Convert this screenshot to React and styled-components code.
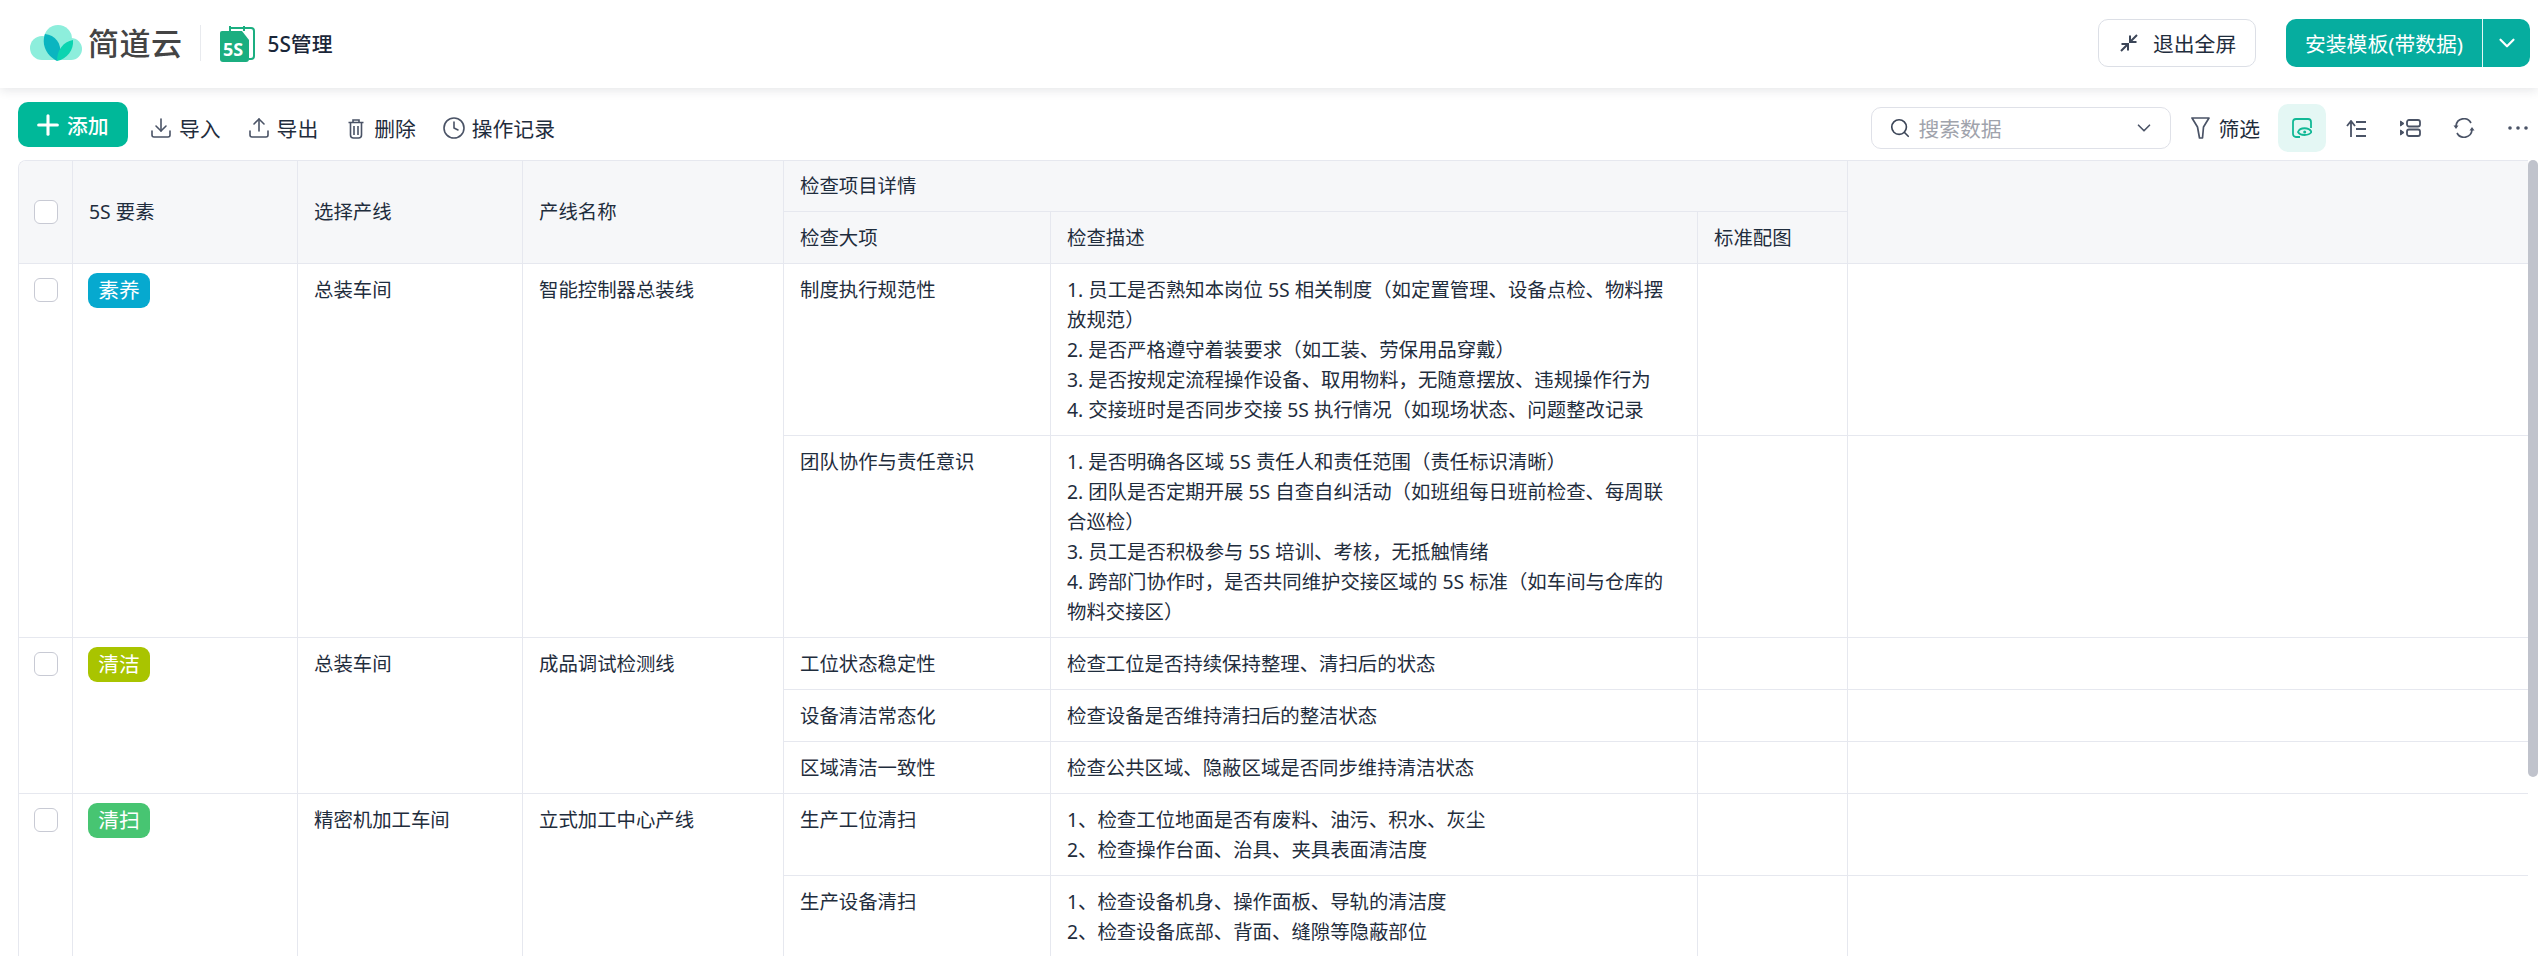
import React from "react";
import styled, { createGlobalStyle } from "styled-components";
import { ChevronDown, Clock, Download, Plus, Search, Upload } from "lucide-react";

const rows = [
  {
    name: "素养",
    color: "#06a9cf",
    workshop: "总装车间",
    line: "智能控制器总装线",
    items: [
      {
        title: "制度执行规范性",
        desc: [
          "1. 员工是否熟知本岗位 5S 相关制度（如定置管理、设备点检、物料摆放规范）",
          "2. 是否严格遵守着装要求（如工装、劳保用品穿戴）",
          "3. 是否按规定流程操作设备、取用物料，无随意摆放、违规操作行为",
          "4. 交接班时是否同步交接 5S 执行情况（如现场状态、问题整改记录",
        ],
      },
      {
        title: "团队协作与责任意识",
        desc: [
          "1. 是否明确各区域 5S 责任人和责任范围（责任标识清晰）",
          "2. 团队是否定期开展 5S 自查自纠活动（如班组每日班前检查、每周联合巡检）",
          "3. 员工是否积极参与 5S 培训、考核，无抵触情绪",
          "4. 跨部门协作时，是否共同维护交接区域的 5S 标准（如车间与仓库的物料交接区）",
        ],
      },
    ],
  },
  {
    name: "清洁",
    color: "#a9c400",
    workshop: "总装车间",
    line: "成品调试检测线",
    items: [
      { title: "工位状态稳定性", desc: ["检查工位是否持续保持整理、清扫后的状态"] },
      { title: "设备清洁常态化", desc: ["检查设备是否维持清扫后的整洁状态"] },
      { title: "区域清洁一致性", desc: ["检查公共区域、隐蔽区域是否同步维持清洁状态"] },
    ],
  },
  {
    name: "清扫",
    color: "#47c572",
    workshop: "精密机加工车间",
    line: "立式加工中心产线",
    items: [
      {
        title: "生产工位清扫",
        desc: ["1、检查工位地面是否有废料、油污、积水、灰尘", "2、检查操作台面、治具、夹具表面清洁度"],
      },
      {
        title: "生产设备清扫",
        desc: ["1、检查设备机身、操作面板、导轨的清洁度", "2、检查设备底部、背面、缝隙等隐蔽部位"],
      },
    ],
  },
];

const CloudLogo = () => (
  <svg width="52" height="36" viewBox="0 0 52 36">
    <g fill="#8deedc">
      <circle cx="12" cy="23" r="12" />
      <circle cx="28" cy="14" r="14" />
      <circle cx="41" cy="24" r="11" />
      <rect x="12" y="20" width="29" height="15" />
    </g>
    <path d="M27 36C17 31 11 20 15 9c10 1 17 9 15 21z" fill="#0ab5c0" />
    <path d="M27 36c0-11 6-19 16-21 1 10-6 19-16 21z" fill="#0bd4b0" />
  </svg>
);

const AppIcon = () => (
  <svg width="35" height="37" viewBox="0 0 35 37">
    <path d="M9 3h22a3 3 0 0 1 3 3v25a3 3 0 0 1-3 3h-2" fill="none" stroke="#1bae80" strokeWidth="2" />
    <path d="M10 1v5M24 1v5" stroke="#1bae80" strokeWidth="2" />
    <path d="M2 6h20l7 9v19a3 3 0 0 1-3 3H3a3 3 0 0 1-3-3V8a2 2 0 0 1 2-2z" fill="#1bae80" />
    <text x="3" y="31" fontSize="18" fontWeight="700" fill="#fff" fontFamily="Noto Sans">
      5S
    </text>
  </svg>
);

const ExitIcon = () => (
  <svg width="20" height="20" viewBox="0 0 20 20" fill="none" stroke="#3c4658" strokeWidth="2">
    <path d="M18 2l-6 6M11 2.5V9h6.5" />
    <path d="M2 18l6-6M2.5 11H9v6.5" />
  </svg>
);

const TrashIcon = () => (
  <svg width="24" height="21" viewBox="-4 0 24 21" fill="none" stroke="#4a5366" strokeWidth="1.6">
    <path d="M0.5 4.5h15M5 4.5V2h6v2.5M2.5 4.5V17a3 3 0 0 0 3 3h5a3 3 0 0 0 3-3V4.5M6 8v9M10 8v9" />
  </svg>
);

const FunnelIcon = () => (
  <svg width="19" height="24" viewBox="0 0 19 24" fill="none" stroke="#4a5366" strokeWidth="1.7" strokeLinejoin="round">
    <path d="M1 2h17l-5.5 9-1 11h-3l-2-11z" />
  </svg>
);

const PreviewIcon = () => (
  <svg width="20" height="20" viewBox="0 0 20 20" fill="none" stroke="#12b896" strokeWidth="1.8">
    <path d="M8 19H4a3 3 0 0 1-3-3V4a3 3 0 0 1 3-3h12a3 3 0 0 1 3 3v6" />
    <path d="M6 14c2-5 11-5 13.5 0-2.5 4-11.5 4-13.500 0z" fill="#e4f7f4" />
    <circle cx="12.7" cy="14" r="1.5" fill="#12b896" stroke="none" />
  </svg>
);

const SortIcon = () => (
  <svg width="20" height="17" viewBox="0 0 20 17" fill="none" stroke="#4a5366" strokeWidth="1.8">
    <path d="M5 17V2M1 6l4-5 4 5M10 2h10M10 9h10M10 16h10" />
  </svg>
);

const GroupIcon = () => (
  <svg width="21" height="18" viewBox="0 0 21 18" fill="none" stroke="#4a5366" strokeWidth="1.8">
    <path d="M0.5 2l3.5 2.5L0.5 7zM0.5 11l3.5 2.5L0.5 16z" fill="#4a5366" strokeWidth="1" />
    <rect x="7" y="1" width="13" height="6.5" rx="2" />
    <rect x="7" y="10.5" width="13" height="6.5" rx="2" />
  </svg>
);

const RefreshIcon = () => (
  <svg width="22" height="20" viewBox="0 0 22 20" fill="none" stroke="#4a5366" strokeWidth="1.7">
    <path d="M3 8a8 8 0 0 1 15-3M19 12A8 8 0 0 1 4 15" />
    <path d="M0.5 7.5h5L3 11zM16.5 12.5h5L19 9z" fill="#4a5366" stroke="none" />
  </svg>
);

const MoreIcon = () => (
  <svg width="20" height="4" viewBox="0 0 20 4" fill="#4a5366">
    <circle cx="2" cy="2" r="1.8" />
    <circle cx="10" cy="2" r="1.8" />
    <circle cx="18" cy="2" r="1.8" />
  </svg>
);

const App = () => {
  return (
    <Page>
      <GlobalStyle />
      <Header>
        <Brand>
          <CloudLogo />
          <BrandName>简道云</BrandName>
          <BrandDivider />
          <AppIcon />
          <AppName>5S管理</AppName>
        </Brand>
        <HeaderActions>
          <ExitButton>
            <ExitIcon />
            退出全屏
          </ExitButton>
          <InstallButton>
            <InstallLabel>安装模板(带数据)</InstallLabel>
            <InstallArrow>
              <ChevronDown size={26} strokeWidth={2} />
            </InstallArrow>
          </InstallButton>
        </HeaderActions>
      </Header>

      <Toolbar>
        <ToolGroup>
          <AddButton>
            <Plus size={32} strokeWidth={2.3} />
            添加
          </AddButton>
          <ToolButton>
            <Download size={24} strokeWidth={1.6} color="#4a5366" />
            导入
          </ToolButton>
          <ToolButton>
            <Upload size={24} strokeWidth={1.6} color="#4a5366" />
            导出
          </ToolButton>
          <ToolButton>
            <TrashIcon />
            删除
          </ToolButton>
          <ToolButton>
            <Clock size={24} strokeWidth={1.6} color="#4a5366" />
            操作记录
          </ToolButton>
        </ToolGroup>
        <ToolRight>
          <SearchBox>
            <Search size={22} strokeWidth={1.8} color="#3c4658" />
            <SearchText>搜索数据</SearchText>
            <ChevronDown size={22} strokeWidth={1.8} color="#4a5366" />
          </SearchBox>
          <FilterButton>
            <FunnelIcon />
            筛选
          </FilterButton>
          <IconButton $active>
            <PreviewIcon />
          </IconButton>
          <IconButton>
            <SortIcon />
          </IconButton>
          <IconButton>
            <GroupIcon />
          </IconButton>
          <IconButton>
            <RefreshIcon />
          </IconButton>
          <IconButton>
            <MoreIcon />
          </IconButton>
        </ToolRight>
      </Toolbar>

      <TableArea>
        <TableFrame>
          <Table>
            <colgroup>
              <col style={{ width: 54 }} />
              <col style={{ width: 225 }} />
              <col style={{ width: 225 }} />
              <col style={{ width: 261 }} />
              <col style={{ width: 267 }} />
              <col style={{ width: 647 }} />
              <col style={{ width: 150 }} />
              <col />
            </colgroup>
            <thead>
              <HeadRow $h={51}>
                <CheckHead rowSpan={2}>
                  <Check />
                </CheckHead>
                <Th rowSpan={2}>5S 要素</Th>
                <Th rowSpan={2}>选择产线</Th>
                <Th rowSpan={2}>产线名称</Th>
                <Th colSpan={3}>检查项目详情</Th>
                <FillerHead rowSpan={2} />
              </HeadRow>
              <HeadRow $h={52}>
                <Th>检查大项</Th>
                <Th>检查描述</Th>
                <Th>标准配图</Th>
              </HeadRow>
            </thead>
            <tbody>
              {rows.map((row) =>
                row.items.map((item, i) => (
                  <tr key={item.title}>
                    {i === 0 && (
                      <>
                        <CheckCell rowSpan={row.items.length}>
                          <Check />
                        </CheckCell>
                        <TagCell rowSpan={row.items.length}>
                          <Tag $color={row.color}>{row.name}</Tag>
                        </TagCell>
                        <Td rowSpan={row.items.length}>{row.workshop}</Td>
                        <Td rowSpan={row.items.length}>{row.line}</Td>
                      </>
                    )}
                    <Td>{item.title}</Td>
                    <Td>
                      {item.desc.map((text) => (
                        <div key={text}>{text}</div>
                      ))}
                    </Td>
                    <Td />
                    <Td />
                  </tr>
                ))
              )}
            </tbody>
          </Table>
        </TableFrame>
        <ScrollThumb />
      </TableArea>
    </Page>
  );
};

export default App;

const GlobalStyle = createGlobalStyle`
  html, body {
    margin: 0;
    padding: 0;
    background: #fff;
  }
  * {
    box-sizing: border-box;
  }
`;

const Page = styled.div`
  display: flex;
  flex-direction: column;
  height: 100vh;
  overflow: hidden;
  font-family: "Noto Sans", "Noto Sans CJK SC", sans-serif;
  font-size: 20.8px;
  color: #1f2d3d;
`;

const Header = styled.header`
  position: relative;
  z-index: 2;
  flex: none;
  display: flex;
  align-items: center;
  justify-content: space-between;
  height: 88px;
  padding: 0 8px 2px 30px;
  background: #fff;
  box-shadow: 0 2px 10px rgba(30, 40, 60, 0.12);
`;

const Brand = styled.div`
  display: flex;
  align-items: center;
`;

const BrandName = styled.span`
  margin-left: 6px;
  font-size: 31px;
  font-weight: 500;
  line-height: 36px;
  color: #444;
  letter-spacing: 0.5px;
`;

const BrandDivider = styled.span`
  width: 1px;
  height: 36px;
  margin: 0 19px 0 17px;
  background: #e8eaee;
`;

const AppName = styled.span`
  margin-left: 13px;
  font-weight: 500;
  color: #1a2638;
`;

const HeaderActions = styled.div`
  display: flex;
  align-items: center;
  gap: 30px;
`;

const ExitButton = styled.button`
  display: flex;
  align-items: center;
  gap: 14px;
  width: 158px;
  height: 48px;
  padding: 0 0 0 20px;
  border: 1px solid #dcdfe6;
  border-radius: 10px;
  background: #fff;
  font: inherit;
  color: inherit;
`;

const InstallButton = styled.div`
  display: flex;
  width: 244px;
  height: 48px;
  border-radius: 10px;
  background: #06ad9f;
  color: #fff;
`;

const InstallLabel = styled.span`
  display: flex;
  align-items: center;
  width: 197px;
  padding-left: 19px;
  border-right: 1px solid #e4f7f4;
  white-space: nowrap;
`;

const InstallArrow = styled.span`
  flex: 1;
  display: flex;
  align-items: center;
  justify-content: center;
`;

const Toolbar = styled.div`
  flex: none;
  display: flex;
  justify-content: space-between;
  height: 72px;
  padding: 14px 0 0 18px;
`;

const ToolGroup = styled.div`
  display: flex;
  align-items: center;
  gap: 26px;
  height: 52px;
`;

const AddButton = styled.button`
  align-self: flex-start;
  display: flex;
  align-items: center;
  gap: 3px;
  width: 110px;
  height: 45px;
  margin-right: -5px;
  padding: 0 0 0 14px;
  border: 0;
  border-radius: 10px;
  background: #00b899;
  font: inherit;
  font-weight: 500;
  color: #fff;
`;

const ToolButton = styled.div`
  display: flex;
  align-items: center;
  gap: 6px;
`;

const ToolRight = styled.div`
  display: flex;
  align-items: center;
  height: 52px;
`;

const SearchBox = styled.div`
  display: flex;
  align-items: center;
  width: 300px;
  height: 42px;
  margin-right: 20px;
  padding: 0 15px 0 17px;
  border: 1px solid #dfe1e8;
  border-radius: 10px;
`;

const SearchText = styled.span`
  flex: 1;
  margin-left: 7px;
  color: #a0a3ac;
`;

const FilterButton = styled.div`
  display: flex;
  align-items: center;
  gap: 8px;
  margin-right: 18px;
`;

const IconButton = styled.div`
  display: flex;
  align-items: center;
  justify-content: center;
  width: 48px;
  height: 48px;
  margin-right: 6px;
  border-radius: 10px;
  background: ${(props) => (props.$active ? "#e4f7f4" : "transparent")};

  &:last-child {
    margin-right: -4px;
  }
`;

const TableArea = styled.div`
  position: relative;
  flex: 1;
  min-height: 0;
  margin-left: 18px;
  padding-right: 10px;
  overflow: hidden;
`;

const TableFrame = styled.div`
  border-top: 1px solid #e6e8ef;
  border-left: 1px solid #e6e8ef;
  border-top-left-radius: 8px;
  overflow: hidden;
`;

const Table = styled.table`
  width: 100%;
  table-layout: fixed;
  border-collapse: separate;
  border-spacing: 0;
  font-size: 19.4px;
  line-height: 30px;
`;

const HeadRow = styled.tr`
  height: ${(props) => props.$h}px;
`;

const Th = styled.th`
  padding: 0 16px;
  border-right: 1px solid #e6e8ef;
  border-bottom: 1px solid #e6e8ef;
  background: #f6f7f9;
  font-weight: 400;
  text-align: left;
  color: #1f2d3d;
`;

const CheckHead = styled(Th)`
  padding-left: 15px;
`;

const FillerHead = styled(Th)`
  border-right: 0;
`;

const Td = styled.td`
  padding: 11px 20px 10px 16px;
  border-right: 1px solid #e6e8ef;
  border-bottom: 1px solid #e6e8ef;
  vertical-align: top;

  &:last-child {
    border-right: 0;
  }
`;

const CheckCell = styled(Td)`
  padding-top: 14px;
  padding-left: 15px;
`;

const TagCell = styled(Td)`
  padding-top: 9px;
  padding-left: 15px;
`;

const Check = styled.span`
  display: block;
  width: 24px;
  height: 24px;
  border: 1.5px solid #c8cad4;
  border-radius: 6px;
  background: #fff;
`;

const Tag = styled.span`
  display: inline-block;
  width: 62px;
  height: 35px;
  border-radius: 9px;
  background: ${(props) => props.$color};
  font-size: 20.8px;
  line-height: 35px;
  text-align: center;
  color: #fff;
`;

const ScrollThumb = styled.div`
  position: absolute;
  top: 0;
  right: 0;
  width: 10px;
  height: 617px;
  border-radius: 5px;
  background: #c0c3cc;
`;
